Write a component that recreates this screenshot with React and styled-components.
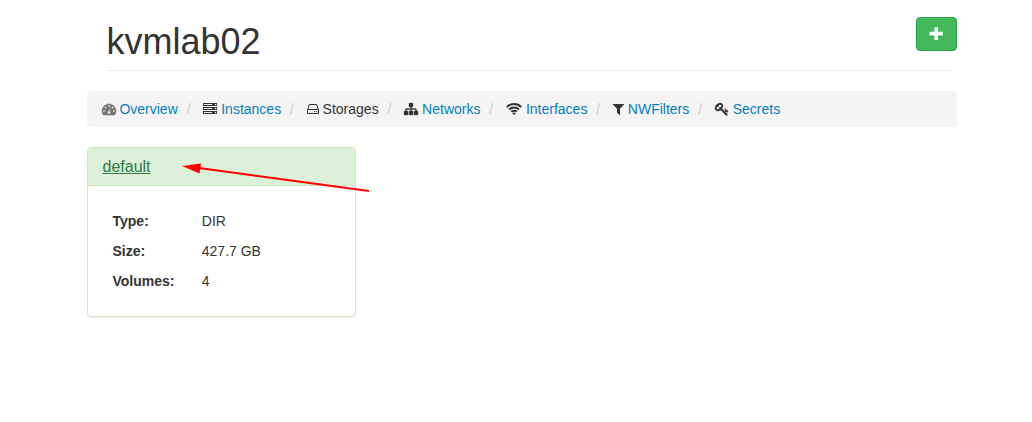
import React from 'react';
import styled, { createGlobalStyle } from 'styled-components';

const GlobalStyle = createGlobalStyle`
  * { box-sizing: border-box; }
  body {
    margin: 0;
    background: #fff;
    color: #333;
    font: 14px/20px "Liberation Sans", Arial, sans-serif;
  }
`;

const Page = styled.main`
  position: relative;
  width: 870px;
  height: 422px;
  margin-left: 86.5px;
  padding-top: 17px;
`;

const Header = styled.header`
  display: flex;
  justify-content: space-between;
  align-items: flex-start;
  height: 53px;
`;

const Title = styled.h1`
  margin: 5px 0 0 20px;
  font-size: 36px;
  font-weight: 400;
  line-height: 40px;
`;

const AddButton = styled.button`
  display: flex;
  align-items: center;
  justify-content: center;
  width: 41px;
  height: 34px;
  padding: 0 1px 0 0;
  color: #fff;
  background: #43b95b;
  border: 1px solid #28a745;
  border-radius: 4px;
`;

const Rule = styled.hr`
  height: 1px;
  margin: 0 5px 20px 20px;
  border: 0;
  background: #eee;
`;

const Breadcrumb = styled.ol`
  height: 36px;
  margin: 0 0 20px;
  padding: 8px 15px;
  list-style: none;
  white-space: nowrap;
  background: #f4f4f4;
  border-radius: 4px;
`;

const Crumb = styled.li`
  display: inline-block;
  & + &::before {
    content: "/\\00a0";
    padding: 0 8.9px 0 5px;
    color: #ccc;
  }
`;

const Link = styled.a`
  color: #0480be;
  text-decoration: none;
`;

const Glyph = styled.svg`
  height: 14px;
  width: ${(p) => p.$w}px;
  vertical-align: -2px;
  fill: currentColor;
  overflow: visible;
  color: ${(p) => p.$color || '#333'};
`;

const Panel = styled.section`
  width: 269px;
  height: 170px;
  background: #fff;
  border: 1px solid #d0e6be;
  border-radius: 4px;
  box-shadow: 0 1px 1px rgba(0, 0, 0, 0.05);
`;

const PanelHeading = styled.div`
  height: 38px;
  padding: 9px 15px;
  background: #ddf0d8;
  border-bottom: 1px solid #d0e6be;
  border-radius: 3px 3px 0 0;
`;

const PanelLink = styled.a`
  color: #2d7a46;
  font-size: 16px;
  line-height: 20px;
  text-decoration: underline;
`;

const Details = styled.dl`
  display: grid;
  grid-template-columns: 89.3px 1fr;
  row-gap: 10px;
  margin: 0;
  padding: 25px 25px 0 25px;
`;

const Term = styled.dt`
  font-weight: 700;
`;

const Value = styled.dd`
  margin: 0;
`;

const Arrow = styled.svg`
  position: absolute;
  left: 93.5px;
  top: 158px;
  width: 192px;
  height: 38px;
  pointer-events: none;
`;

const icons = {
  gauge: {
    w: 14,
    box: '0 0 1792 1792',
    stroke: 70,
    d: 'M384 1152q0-53-37.5-90.5t-90.5-37.5-90.5 37.5-37.5 90.5 37.5 90.5 90.5 37.5 90.5-37.5 37.5-90.5zm192-448q0-53-37.5-90.5t-90.5-37.5-90.5 37.5-37.5 90.5 37.5 90.5 90.5 37.5 90.5-37.5 37.5-90.5zm428 481l101-382q6-26-7.5-48.5t-38.5-29.5-48 6.5-30 39.5l-101 382q-60 5-107 43.5t-63 98.5q-20 77 20 146t117 89 146-20 89-117q16-60-6-117t-72-91zm660-33q0-53-37.5-90.5t-90.5-37.5-90.5 37.5-37.5 90.5 37.5 90.5 90.5 37.5 90.5-37.5 37.5-90.5zm-640-640q0-53-37.5-90.5t-90.5-37.5-90.5 37.5-37.5 90.5 37.5 90.5 90.5 37.5 90.5-37.5 37.5-90.5zm448 192q0-53-37.5-90.5t-90.5-37.5-90.5 37.5-37.5 90.5 37.5 90.5 90.5 37.5 90.5-37.5 37.5-90.5zm320 448q0 261-141 483-19 29-54 29h-1402q-35 0-54-29-141-221-141-483 0-182 71-348t191-286 286-191 348-71 348 71 286 191 191 286 71 348z',
  },
  server: {
    w: 14,
    box: '0 0 1792 1792',
    d: 'M128 1408h1024v-128h-1024v128zm0-512h1024v-128h-1024v128zm1568 448q0-40-28-68t-68-28-68 28-28 68 28 68 68 28 68-28 28-68zm-1568-960h1024v-128h-1024v128zm1568 448q0-40-28-68t-68-28-68 28-28 68 28 68 68 28 68-28 28-68zm0-512q0-40-28-68t-68-28-68 28-28 68 28 68 68 28 68-28 28-68zm96 832v384h-1792v-384h1792zm0-512v384h-1792v-384h1792zm0-512v384h-1792v-384h1792z',
  },
  disk: {
    w: 12,
    box: '128 0 1536 1792',
    d: 'M1168 1216q0 33-23.5 56.5t-56.5 23.5-56.5-23.5-23.5-56.5 23.5-56.5 56.5-23.5 56.5 23.5 23.5 56.5zm256 0q0 33-23.5 56.5t-56.5 23.5-56.5-23.5-23.5-56.5 23.5-56.5 56.5-23.5 56.5 23.5 23.5 56.5zm112 160v-320q0-13-9.5-22.5t-22.5-9.5h-1216q-13 0-22.5 9.5t-9.5 22.5v320q0 13 9.5 22.5t22.5 9.5h1216q13 0 22.5-9.5t9.5-22.5zm-1230-480h1180l-157-482q-4-13-16-21.5t-26-8.5h-782q-14 0-26 8.5t-16 21.5zm1358 160v320q0 66-47 113t-113 47h-1216q-66 0-113-47t-47-113v-320q0-25 16-75l197-606q17-53 63-86t101-33h782q55 0 101 33t63 86l197 606q16 50 16 75z',
  },
  sitemap: {
    w: 14,
    box: '0 0 1792 1792',
    stroke: 50,
    d: 'M1792 1248v320q0 40-28 68t-68 28h-320q-40 0-68-28t-28-68v-320q0-40 28-68t68-28h96v-192h-512v192h96q40 0 68 28t28 68v320q0 40-28 68t-68 28h-320q-40 0-68-28t-28-68v-320q0-40 28-68t68-28h96v-192h-512v192h96q40 0 68 28t28 68v320q0 40-28 68t-68 28h-320q-40 0-68-28t-28-68v-320q0-40 28-68t68-28h96v-192q0-52 38-90t90-38h512v-192h-96q-40 0-68-28t-28-68v-320q0-40 28-68t68-28h320q40 0 68 28t28 68v320q0 40-28 68t-68 28h-96v192h512q52 0 90 38t38 90v192h96q40 0 68 28t28 68z',
  },
  filter: {
    w: 11,
    box: '192 0 1408 1792',
    d: 'M1595 295q17 41-14 70l-493 493v742q0 42-39 59-13 5-25 5-27 0-45-19l-256-256q-19-19-19-45v-486l-493-493q-31-29-14-70 17-39 59-39h1280q42 0 59 39z',
  },
  key: {
    w: 14,
    box: '0 0 1792 1792',
    stroke: 60,
    d: 'M832 512q0-80-56-136t-136-56-136 56-56 136q0 42 19 83-41-19-83-19-80 0-136 56t-56 136 56 136 136 56 136-56 56-136q0-42-19-83 41 19 83 19 80 0 136-56t56-136zm851 704q0 17-49 66t-66 49q-9 0-28.5-16t-36.5-33-38.5-40-24.5-26l-96 96 220 220q28 28 28 68 0 42-39 81t-81 39q-40 0-68-28l-671-671q-176 131-365 131-163 0-265.5-102.5t-102.5-265.5q0-160 95-313t248-248 313-95q163 0 265.5 102.5t102.5 265.5q0 189-131 365l355 355 96-96q-3-3-26-24.5t-40-38.5-33-36.5-16-28.5q0-17 49-66t66-49q13 0 23 10 6 6 46 44.5t82 79.5 86.5 86 73 78 28.5 41z',
  },
};

function Icon({ name, color }) {
  if (name === 'wifi') {
    return (
      <Glyph $w={16} viewBox="0 0 16 14" aria-hidden="true">
        <g fill="none" stroke="currentColor" strokeWidth="2">
          <path d="M.8 5.1a10.2 10.2 0 0 1 14.4 0" />
          <path d="M3.1 7.5a6.9 6.9 0 0 1 9.8 0" />
          <path d="M5.3 9.8a3.8 3.8 0 0 1 5.4 0" />
        </g>
        <path d="M8 13l-1.7-1.7a2.4 2.4 0 0 1 3.4 0z" />
      </Glyph>
    );
  }
  const icon = icons[name];
  return (
    <Glyph $w={icon.w} $color={color} viewBox={icon.box} aria-hidden="true">
      <path d={icon.d} stroke="currentColor" strokeWidth={icon.stroke || 0} />
    </Glyph>
  );
}

const crumbs = [
  { icon: 'gauge', label: 'Overview', color: '#777' },
  { icon: 'server', label: 'Instances' },
  { icon: 'disk', label: 'Storages', active: true },
  { icon: 'sitemap', label: 'Networks' },
  { icon: 'wifi', label: 'Interfaces' },
  { icon: 'filter', label: 'NWFilters' },
  { icon: 'key', label: 'Secrets' },
];

const details = [
  ['Type:', 'DIR'],
  ['Size:', '427.7 GB'],
  ['Volumes:', '4'],
];

export default function App() {
  return (
    <>
      <GlobalStyle />
      <Page>
        <Header>
          <Title>kvmlab02</Title>
          <AddButton aria-label="Add storage">
            <svg width="14" height="14" viewBox="0 0 14 14" fill="currentColor">
              <path d="M5.5 .2h3.500v4.600h4.700v3.700h-4.700v4.600h-3.500v-4.600h-4.900v-3.700h4.900z" />
            </svg>
          </AddButton>
        </Header>
        <Rule />
        <Breadcrumb>
          {crumbs.map((c) => (
            <React.Fragment key={c.label}>
              <Crumb>
                <Icon name={c.icon} color={c.color} />{' '}
                {c.active ? c.label : <Link>{c.label}</Link>}
              </Crumb>{' '}
            </React.Fragment>
          ))}
        </Breadcrumb>
        <Panel>
          <PanelHeading>
            <PanelLink>default</PanelLink>
          </PanelHeading>
          <Details>
            {details.map(([term, value]) => (
              <React.Fragment key={term}>
                <Term>{term}</Term>
                <Value>{value}</Value>
              </React.Fragment>
            ))}
          </Details>
        </Panel>
        <Arrow viewBox="180 158 192 38">
          <path d="M199 168L369 191" stroke="#f00" strokeWidth="2" />
          <path d="M182 166L201 163.500L199.500 173.500Z" fill="#f00" />
        </Arrow>
      </Page>
    </>
  );
}
